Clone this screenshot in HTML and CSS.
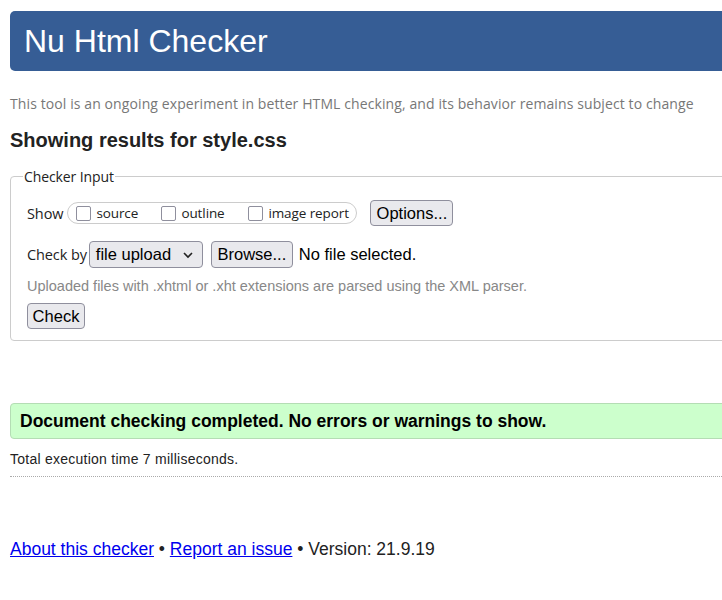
FILE: index.html
```html
<!DOCTYPE html>
<html lang="en">
<head>
<meta charset="utf-8">
<title>Nu Html Checker</title>
<link rel="stylesheet" href="styles.css">
</head>
<body>
<div class="page">
  <h1 class="banner">Nu Html Checker</h1>
  <p class="intro">This tool is an ongoing experiment in better HTML checking, and its behavior remains subject to change</p>
  <h2 class="results">Showing results for style.css</h2>
  <fieldset class="input">
    <legend>Checker Input</legend>
    <div class="row">
      <span class="lbl">Show</span>
      <span class="pill">
        <label class="opt"><span class="box"></span>source</label>
        <label class="opt"><span class="box"></span>outline</label>
        <label class="opt"><span class="box"></span>image report</label>
      </span>
      <span class="btn opts">Options...</span>
    </div>
    <div class="row row2">
      <span class="lbl">Check by</span>
      <span class="btn select">file upload
        <svg class="chev" width="12" height="8" viewBox="0 0 12 8"><path d="M2 2 L6 6 L10 2" fill="none" stroke="#222" stroke-width="1.6"/></svg>
      </span>
      <span class="btn browse">Browse...</span>
      <span class="nofile">No file selected.</span>
    </div>
    <p class="note">Uploaded files with .xhtml or .xht extensions are parsed using the XML parser.</p>
    <span class="btn check">Check</span>
  </fieldset>
  <p class="success">Document checking completed. No errors or warnings to show.</p>
  <p class="time">Total execution time 7 milliseconds.</p>
  <p class="footer"><a href="#">About this checker</a> • <a href="#">Report an issue</a> • Version: 21.9.19</p>
</div>
</body>
</html>
```
FILE: styles.css
```css
html, body {
  margin: 0;
  padding: 0;
  overflow: hidden;
  background: #fff;
}
body {
  font-family: "Liberation Sans", Arial, sans-serif;
  color: #222;
}
.page {
  padding: 11px 0 0 10px;
  margin-right: -40px;
}
.banner {
  margin: 0;
  height: 60px;
  background: #365d95;
  color: #fff;
  border-radius: 5px;
  font-weight: normal;
  font-size: 32px;
  line-height: 60px;
  padding-left: 14px;
}
.intro {
  margin: 23px 0 0;
  font-family: "Open Sans", "Noto Sans", sans-serif;
  font-size: 14px;
  line-height: 20px;
  color: #777;
  letter-spacing: 0.1px;
}
.results {
  margin: 15px 0 0;
  font-size: 20px;
  line-height: 22px;
  color: #222;
}
.input {
  margin: 16px 0 0;
  border: 1px solid #ccc;
  border-radius: 4px;
  padding: 14px 16px 11px 16px;
  font-family: "Open Sans", "Noto Sans", sans-serif;
}
.input legend {
  font-size: 14px;
  padding: 0 1px;
  margin-left: -4px;
  color: #222;
  letter-spacing: -0.1px;
}
.row {
  display: flex;
  align-items: center;
  height: 26px;
}
.row2 {
  margin-top: 15px;
  height: 27px;
}
.lbl {
  font-size: 14.5px;
  margin-right: 2px;
  letter-spacing: -0.1px;
}
.pill {
  display: flex;
  align-items: center;
  border: 1px solid #ccc;
  border-radius: 11px;
  height: 20px;
  width: 280px;
  padding-left: 8px;
  margin-left: 2px;
  box-sizing: content-box;
}
.opt {
  display: flex;
  align-items: center;
  font-size: 13.5px;
  letter-spacing: -0.1px;
}
.opt:nth-child(1) { width: 85px; }
.opt:nth-child(2) { width: 87px; }
.box {
  width: 15px;
  height: 15px;
  border: 1.5px solid #8f8f9d;
  border-radius: 2px;
  margin-right: 5px;
  box-sizing: border-box;
  background: #fff;
}
.btn {
  display: inline-flex;
  align-items: center;
  background: #e9e9ed;
  border: 1px solid #8f8f9d;
  border-radius: 4px;
  font-family: "Liberation Sans", Arial, sans-serif;
  font-size: 16.5px;
  color: #000;
  box-sizing: border-box;
  padding: 0 6px;
}
.opts {
  margin-left: 13px;
  height: 26px;
  width: 83px;
  justify-content: center;
}
.select {
  height: 27px;
  width: 114px;
  padding: 0 7px 0 6px;
  justify-content: space-between;
}
.chev { margin-right: 1px; }
.browse {
  margin-left: 8px;
  height: 27px;
  width: 82px;
  justify-content: center;
}
.nofile {
  font-family: "Liberation Sans", Arial, sans-serif;
  font-size: 16.5px;
  color: #000;
  margin-left: 6px;
}
.note {
  margin: 8px 0 0;
  font-size: 14.5px;
  line-height: 20px;
  color: #888;
  font-family: "Liberation Sans", Arial, sans-serif;
}
.check {
  margin-top: 7px;
  height: 26px;
  width: 58px;
  justify-content: center;
}
.success {
  margin: 62px 0 0;
  height: 36px;
  box-sizing: border-box;
  background: #ccffcc;
  border: 1px solid #b4ddb4;
  border-radius: 4px;
  font-weight: bold;
  font-size: 17.5px;
  line-height: 34px;
  padding-left: 9px;
  color: #000;
}
.time {
  margin: 12px 0 0;
  font-size: 14px;
  line-height: 16px;
  padding-bottom: 9px;
  border-bottom: 1px dotted #aaa;
  color: #222;
  letter-spacing: 0.25px;
}
.footer {
  margin: 61px 0 0;
  font-size: 17.5px;
  line-height: 22px;
  color: #222;
}
.footer a {
  color: #00e;
}
```
